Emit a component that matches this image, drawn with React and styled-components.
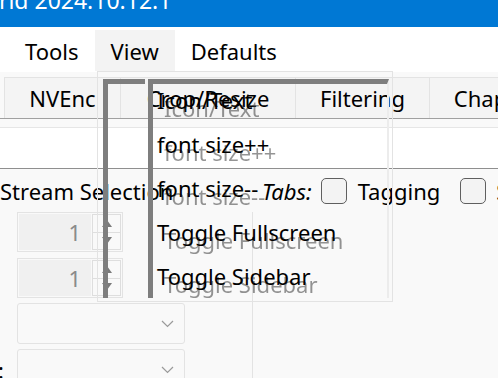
import React from 'react';
import styled, { createGlobalStyle } from 'styled-components';

const GlobalStyle = createGlobalStyle`
  html, body {
    margin: 0;
    padding: 0;
    background: #f9f9f9;
    overflow: hidden;
  }
  body {
    font-family: 'Noto Sans', 'Open Sans', sans-serif;
    font-size: 22px;
    color: #000;
  }
`;

const Window = styled.div`
  width: 498px;
  height: 378px;
  position: relative;
  overflow: hidden;
  background: #f9f9f9;
`;

const TitleBar = styled.div`
  height: 27px;
  background: #0078d4;
  color: #fff;
  overflow: hidden;
  white-space: nowrap;
`;

const TitleText = styled.div`
  font-size: 23px;
  line-height: 23px;
  margin-top: -11px;
  margin-left: -44px;
`;

const MenuBar = styled.div`
  height: 45px;
  box-sizing: border-box;
  padding: 3px 0 0 9px;
  background: #fff;
  display: flex;
`;

const MenuItem = styled.div`
  height: 41px;
  padding: 0 16px;
  display: flex;
  align-items: center;
  background: ${p => (p.$open ? '#f3f3f3' : 'transparent')};
`;

const TabStrip = styled.div`
  height: 47px;
  box-sizing: border-box;
  padding: 5px 0 0 4px;
  display: flex;
  border-bottom: 1px solid #a0a0a0;
`;

const Tab = styled.div`
  flex: none;
  width: ${p => p.$w}px;
  box-sizing: border-box;
  border-left: 1px solid #e3e3e3;
  border-top: 1px solid #e3e3e3;
  background: #f4f4f4;
  display: flex;
  align-items: center;
  justify-content: center;
  white-space: nowrap;
`;

const Band = styled.div`
  margin-top: 8px;
  height: 42px;
  box-sizing: border-box;
  background: #fff;
  border-top: 1px solid #e6e6e6;
  border-bottom: 1px solid #8f8f8f;
`;

const HeaderRow = styled.div`
  height: 43px;
  display: flex;
  align-items: center;
  white-space: nowrap;
`;

const SectionLabel = styled.div`
  flex: none;
  width: 253px;
  overflow: hidden;
`;

const OptionRow = styled.div`
  display: flex;
  align-items: center;
  padding-left: 9px;
`;

const Italic = styled.span`
  font-style: italic;
  margin-right: 9px;
`;

const Check = styled.div`
  flex: none;
  width: 26px;
  height: 26px;
  box-sizing: border-box;
  border: 1.5px solid #5f5f5f;
  border-radius: 5px;
  background: #f3f3f3;
  margin-right: ${p => p.$mr}px;
`;

const CheckText = styled.span`
  margin-right: ${p => p.$mr || 0}px;
`;

const Body = styled.div`
  display: flex;
  height: 200px;
`;

const LeftPane = styled.div`
  flex: none;
  width: 252px;
  border-right: 1px solid #e3e3e3;
  display: flex;
  flex-direction: column;
`;

const FieldRow = styled.div`
  display: flex;
  margin-top: ${p => p.$mt || 0}px;
`;

const FieldLabel = styled.div`
  flex: none;
  width: 4px;
  margin-right: 13px;
  display: flex;
  justify-content: flex-end;
  align-items: center;
  overflow: hidden;
  white-space: nowrap;
`;

const SpinBox = styled.div`
  width: 106px;
  height: 40px;
  box-sizing: border-box;
  border: 1px solid #e3e3e3;
  display: flex;
  padding: 1px;
`;

const SpinField = styled.div`
  width: 72px;
  background: #f0f0f0;
  color: #8a8a8a;
  display: flex;
  align-items: center;
  justify-content: flex-end;
  padding-right: 10px;
  box-sizing: border-box;
`;

const SpinButtons = styled.div`
  width: 29px;
  margin-left: 1px;
  display: flex;
  flex-direction: column;
`;

const SpinButton = styled.div`
  flex: 1;
  border: 1px solid #dedede;
  margin-top: ${p => (p.$down ? '-1px' : '0')};
  display: flex;
  align-items: center;
  justify-content: center;
`;

const Combo = styled.div`
  width: 168px;
  height: 41px;
  box-sizing: border-box;
  border: 1px solid #e3e3e3;
  border-radius: 3px;
  background: #f9f9f9;
  display: flex;
  align-items: center;
  justify-content: flex-end;
  padding-right: 10px;
`;

const Popup = styled.div`
  position: absolute;
  left: 97px;
  top: 71px;
  width: 296px;
  height: 231px;
  box-sizing: border-box;
  border: 1px solid #e3e3e3;
  padding: 6px 0 0 59px;
`;

const Frame = styled.div`
  position: absolute;
  top: 7px;
  left: ${p => p.$left}px;
  width: ${p => p.$w}px;
  height: 219px;
  box-sizing: border-box;
  border-top: 5px solid #7e7e7e;
  border-left: 5px solid #7e7e7e;
  border-right: ${p => (p.$edge ? '2px solid #ececec' : 'none')};
`;

const PopItem = styled.div`
  position: relative;
  height: 44px;
  line-height: 44px;
  white-space: nowrap;
`;

const Ghost = styled.span`
  position: absolute;
  left: 7px;
  top: 8px;
  color: rgba(60, 60, 60, 0.55);
  filter: blur(0.6px);
`;

const ItemText = styled.span`
  position: relative;
`;

const Arrow = ({ down }) => (
  <svg width="10" height="7" viewBox="0 0 10 7">
    <polygon points={down ? '0,0 10,0 5,7' : '5,0 10,7 0,7'} fill="#7a7a7a" />
  </svg>
);

const Chevron = () => (
  <svg width="13" height="8" viewBox="0 0 13 8">
    <polyline points="1,1 6.5,6.5 12,1" fill="none" stroke="#9a9a9a" strokeWidth="1.2" />
  </svg>
);

const Spin = ({ value }) => (
  <SpinBox>
    <SpinField>{value}</SpinField>
    <SpinButtons>
      <SpinButton><Arrow /></SpinButton>
      <SpinButton $down><Arrow down /></SpinButton>
    </SpinButtons>
  </SpinBox>
);

const viewItems = ['Icon/Text', 'font size++', 'font size--', 'Toggle Fullscreen', 'Toggle Sidebar'];

export default function App() {
  return (
    <Window>
      <GlobalStyle />
      <TitleBar>
        <TitleText>Hybrid 2024.10.12.1</TitleText>
      </TitleBar>
      <MenuBar>
        <MenuItem>Tools</MenuItem>
        <MenuItem $open>View</MenuItem>
        <MenuItem>Defaults</MenuItem>
      </MenuBar>
      <TabStrip>
        <Tab $w={116}>NVEnc</Tab>
        <Tab $w={175}>Crop/Resize</Tab>
        <Tab $w={134}>Filtering</Tab>
        <Tab $w={142}>Chapters</Tab>
      </TabStrip>
      <Band />
      <HeaderRow>
        <SectionLabel>Stream Selection</SectionLabel>
        <OptionRow>
          <Italic>Tabs:</Italic>
          <Check $mr={11} />
          <CheckText $mr={20}>Tagging</CheckText>
          <Check $mr={10} />
          <CheckText>Subtitles</CheckText>
        </OptionRow>
      </HeaderRow>
      <Body>
        <LeftPane>
          <FieldRow>
            <FieldLabel />
            <Spin value="1" />
          </FieldRow>
          <FieldRow $mt={6}>
            <FieldLabel />
            <Spin value="1" />
          </FieldRow>
          <FieldRow $mt={5}>
            <FieldLabel />
            <Combo><Chevron /></Combo>
          </FieldRow>
          <FieldRow $mt={5}>
            <FieldLabel>Language:</FieldLabel>
            <Combo><Chevron /></Combo>
          </FieldRow>
        </LeftPane>
      </Body>
      <Popup>
        <Frame $left={5} $w={42} />
        <Frame $left={50} $w={241} $edge />
        {viewItems.map(item => (
          <PopItem key={item}>
            <Ghost>{item}</Ghost>
            <ItemText>{item}</ItemText>
          </PopItem>
        ))}
      </Popup>
    </Window>
  );
}
